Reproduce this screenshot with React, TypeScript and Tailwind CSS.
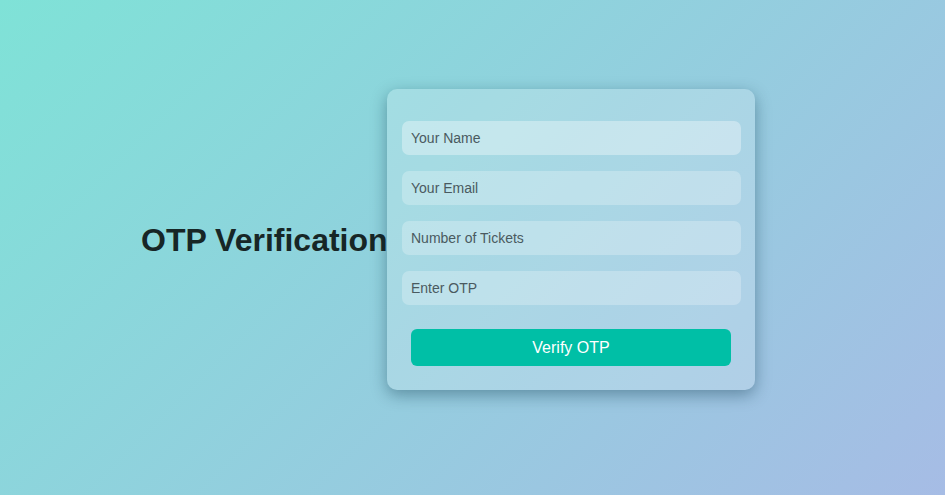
export default function App() {
  return (
    <main className="h-[495px] w-full bg-[linear-gradient(135deg,#7fe2d7,#a6bce5)] font-['Liberation_Sans',Arial,sans-serif] pt-[89px] pl-[141px]">
      <div className="flex items-center">
        <h1 className="text-[32px] font-bold text-[#172626] leading-none w-[246px] whitespace-nowrap mt-[1px]">OTP Verification</h1>

        {/* card */}
        <div className="w-[368px] rounded-[10px] bg-white/20 shadow-[0_5px_16px_rgba(10,50,70,0.4)] pl-[15px] pr-[14px] pt-[32px] pb-[24px]">
          <input placeholder="Your Name" className="block w-full h-[34px] rounded-[7px] bg-white/35 px-[9px] text-[14px] text-[#333] placeholder:text-[#4a5a60] outline-none mb-[16px]" />
          <input placeholder="Your Email" className="block w-full h-[34px] rounded-[7px] bg-white/25 px-[9px] text-[14px] text-[#333] placeholder:text-[#4a5a60] outline-none mb-[16px]" />
          <input placeholder="Number of Tickets" className="block w-full h-[34px] rounded-[7px] bg-white/25 px-[9px] text-[14px] text-[#333] placeholder:text-[#4a5a60] outline-none mb-[16px]" />
          <input placeholder="Enter OTP" className="block w-full h-[34px] rounded-[7px] bg-white/25 px-[9px] text-[14px] text-[#333] placeholder:text-[#4a5a60] outline-none" />
          <button className="block mx-[9px] mt-[24px] w-[320px] h-[37px] rounded-[6px] bg-[#00bfa6] text-white text-[16px]">Verify OTP</button>
        </div>
      </div>
    </main>
  );
}
